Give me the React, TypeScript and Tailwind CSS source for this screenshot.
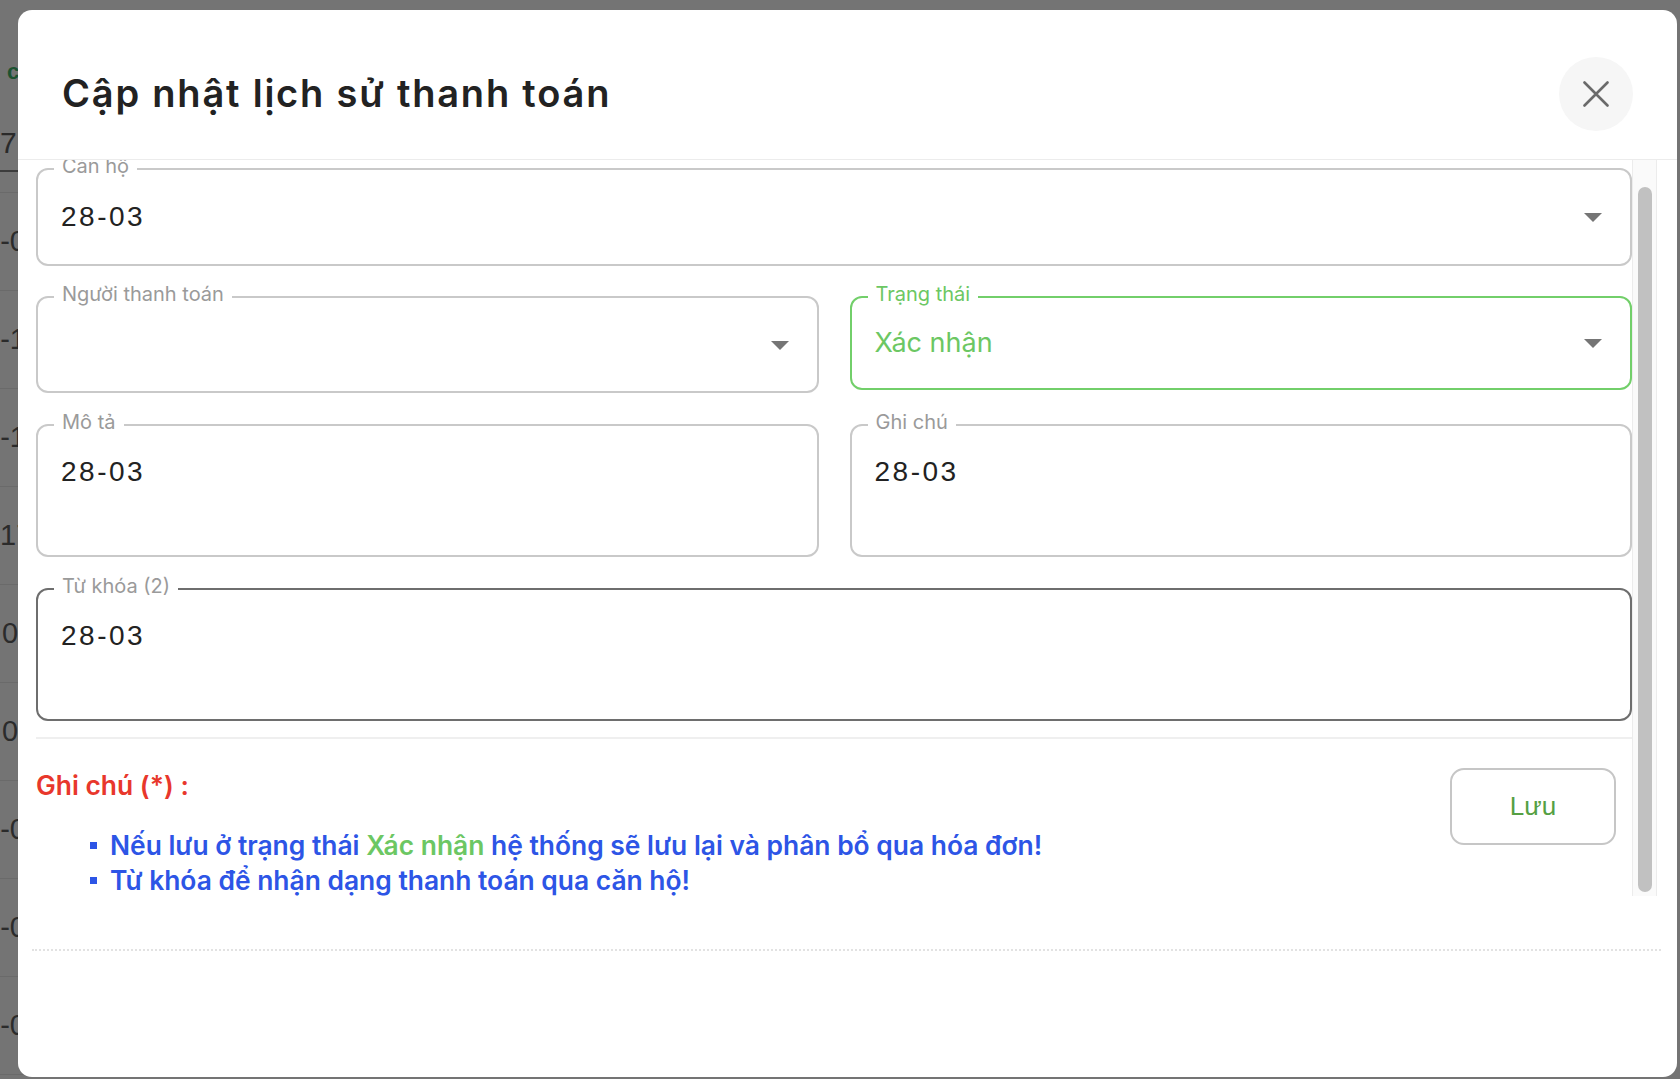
import React from 'react'

const BG_ROWS = [
  { text: '8-05', offset: '-ml-[16px]' },
  { text: '8-12', offset: '-ml-[16px]' },
  { text: '8-11', offset: '-ml-[16px]' },
  { text: '17/03', offset: 'ml-0' },
  { text: '03', offset: 'ml-[2px]' },
  { text: '02', offset: 'ml-[2px]' },
  { text: '8-04', offset: '-ml-[16px]' },
  { text: '8-06', offset: '-ml-[16px]' },
  { text: '8-09', offset: '-ml-[16px]' },
]

const Caret = () => (
  <svg width="18" height="9" viewBox="0 0 18 9" className="shrink-0">
    <path d="M0 0H18L9 9Z" fill="#757575" />
  </svg>
)

type FieldProps = {
  label: string
  children?: React.ReactNode
  tone?: 'idle' | 'green' | 'dark'
  height: string
  select?: boolean
  gap?: string
}

// legend is 30px tall with extra bottom padding so the label sits a bit above the border line
const Field = ({ label, children, tone = 'idle', height, select, gap = 'mt-[16px]' }: FieldProps) => {
  const border =
    tone === 'green' ? 'border-[#72cf6a]' : tone === 'dark' ? 'border-[#6e6e6e]' : 'border-[#c9c9c9]'
  const labelColor = tone === 'green' ? 'text-[#6cc763]' : 'text-[#9a9a9a]'
  return (
    <fieldset className={`min-w-0 rounded-[12px] border-2 px-[16px] ${border} ${height}`}>
      <legend className={`px-[8px] pb-[6px] text-[20px] leading-[24px] ${labelColor}`}>{label}</legend>
      <div className={`${gap} flex h-[32px] items-center justify-between pl-[7px] pr-[12px]`}>
        <div className="truncate">{children}</div>
        {select && <Caret />}
      </div>
    </fieldset>
  )
}

const Value = ({ children }: { children: React.ReactNode }) => (
  <span className="font-['Liberation_Sans',sans-serif] text-[28px] leading-[32px] tracking-[2.5px] text-[#222]">
    {children}
  </span>
)

export default function App() {
  return (
    <div className="relative h-[1079px] w-[1680px] overflow-hidden bg-[#747474] font-['Inter',sans-serif]">
      {/* page behind the overlay */}
      <div className="flex w-[60px] flex-col font-['Liberation_Sans',sans-serif]">
        <div className="h-[172px] border-b-2 border-[#3c3c3c] pt-[58px]">
          <div className="ml-[7px] text-[22px] font-bold leading-[28px] text-[#1c5230]">c</div>
          <div className="mt-[40px] text-[30px] leading-[34px] text-[#2a2a2a]">7</div>
        </div>
        <div className="h-[21px] border-b border-[#6a6a6a]" />
        {BG_ROWS.map((r, i) => (
          <div key={i} className="flex h-[98px] items-center border-b border-[#6a6a6a]">
            <span className={`${r.offset} whitespace-nowrap text-[29px] text-[#2b2b2b]`}>{r.text}</span>
          </div>
        ))}
      </div>

      {/* modal */}
      <div className="absolute bottom-[2px] left-[18px] right-[3px] top-[10px] flex flex-col rounded-[14px] bg-white">
        <div className="flex h-[150px] shrink-0 items-center justify-between border-b border-[#ececec] px-[44px] pt-[18px]">
          <h2 className="text-[38px] font-semibold tracking-[1.8px] text-[#222]">Cập nhật lịch sử thanh toán</h2>
          <button className="flex h-[74px] w-[74px] items-center justify-center rounded-full bg-[#f6f6f6]">
            <svg width="26" height="26" viewBox="0 0 26 26">
              <path d="M1.5 1.5L24.5 24.5M24.5 1.5L1.5 24.5" stroke="#6a6a6a" strokeWidth="2.6" strokeLinecap="round" />
            </svg>
          </button>
        </div>

        <div className="flex h-[736px] shrink-0">
          <div className="min-w-0 flex-1 overflow-hidden pl-[18px]">
            <div className="-mt-[6px] flex flex-col">
              <Field label="Căn hộ" height="h-[112px]" select gap="mt-[17px]">
                <Value>28-03</Value>
              </Field>

              <div className="mt-[16px] grid grid-cols-2 items-start gap-x-[31px]">
                <Field label="Người thanh toán" height="h-[111px]" select gap="mt-[17px]" />
                <Field label="Trạng thái" tone="green" height="h-[108px]" select gap="mt-[15px]">
                  <span className="text-[27px] leading-[32px] text-[#6cc763]">Xác nhận</span>
                </Field>
              </div>

              <div className="mt-[17px] grid grid-cols-2 gap-x-[31px]">
                <Field label="Mô tả" height="h-[147px]">
                  <Value>28-03</Value>
                </Field>
                <Field label="Ghi chú" height="h-[147px]">
                  <Value>28-03</Value>
                </Field>
              </div>

              <div className="mt-[17px]">
                <Field label="Từ khóa (2)" tone="dark" height="h-[147px]">
                  <Value>28-03</Value>
                </Field>
              </div>

              <div className="mt-[16px] h-[2px] bg-[#efefef]" />

              <div className="mt-[29px] flex items-start justify-between pr-[16px]">
                <div>
                  <div className="text-[26.4px] font-semibold leading-[34px] text-[#e8372c]">Ghi chú (*) :</div>
                  <ul className="mt-[26px] flex flex-col text-[26.4px] font-semibold leading-[35px] text-[#2d55e6]">
                    <li className="flex items-center">
                      <span className="ml-[54px] mr-[13px] h-[7px] w-[7px] bg-[#2d55e6]" />
                      <span>
                        Nếu lưu ở trạng thái <span className="text-[#6cc763]">Xác nhận</span> hệ thống sẽ lưu lại và
                        phân bổ qua hóa đơn!
                      </span>
                    </li>
                    <li className="flex items-center">
                      <span className="ml-[54px] mr-[13px] h-[7px] w-[7px] bg-[#2d55e6]" />
                      <span>Từ khóa để nhận dạng thanh toán qua căn hộ!</span>
                    </li>
                  </ul>
                </div>
                <button className="h-[77px] w-[166px] rounded-[14px] border-2 border-[#c6c6c6] bg-white font-['Liberation_Sans',sans-serif] text-[26px] text-[#55a043]">
                  Lưu
                </button>
              </div>
            </div>
          </div>

          {/* scrollbar */}
          <div className="mr-[20px] flex w-[25px] shrink-0 justify-center border-x border-[#ececec] bg-[#fafafa] pb-[4px] pt-[27px]">
            <div className="w-[14px] rounded-full bg-[#c1c1c1]" />
          </div>
        </div>

        <div className="ml-[14px] mr-[16px] mt-[53px] border-t-2 border-dotted border-[#e2e2e2]" />
      </div>
    </div>
  )
}
